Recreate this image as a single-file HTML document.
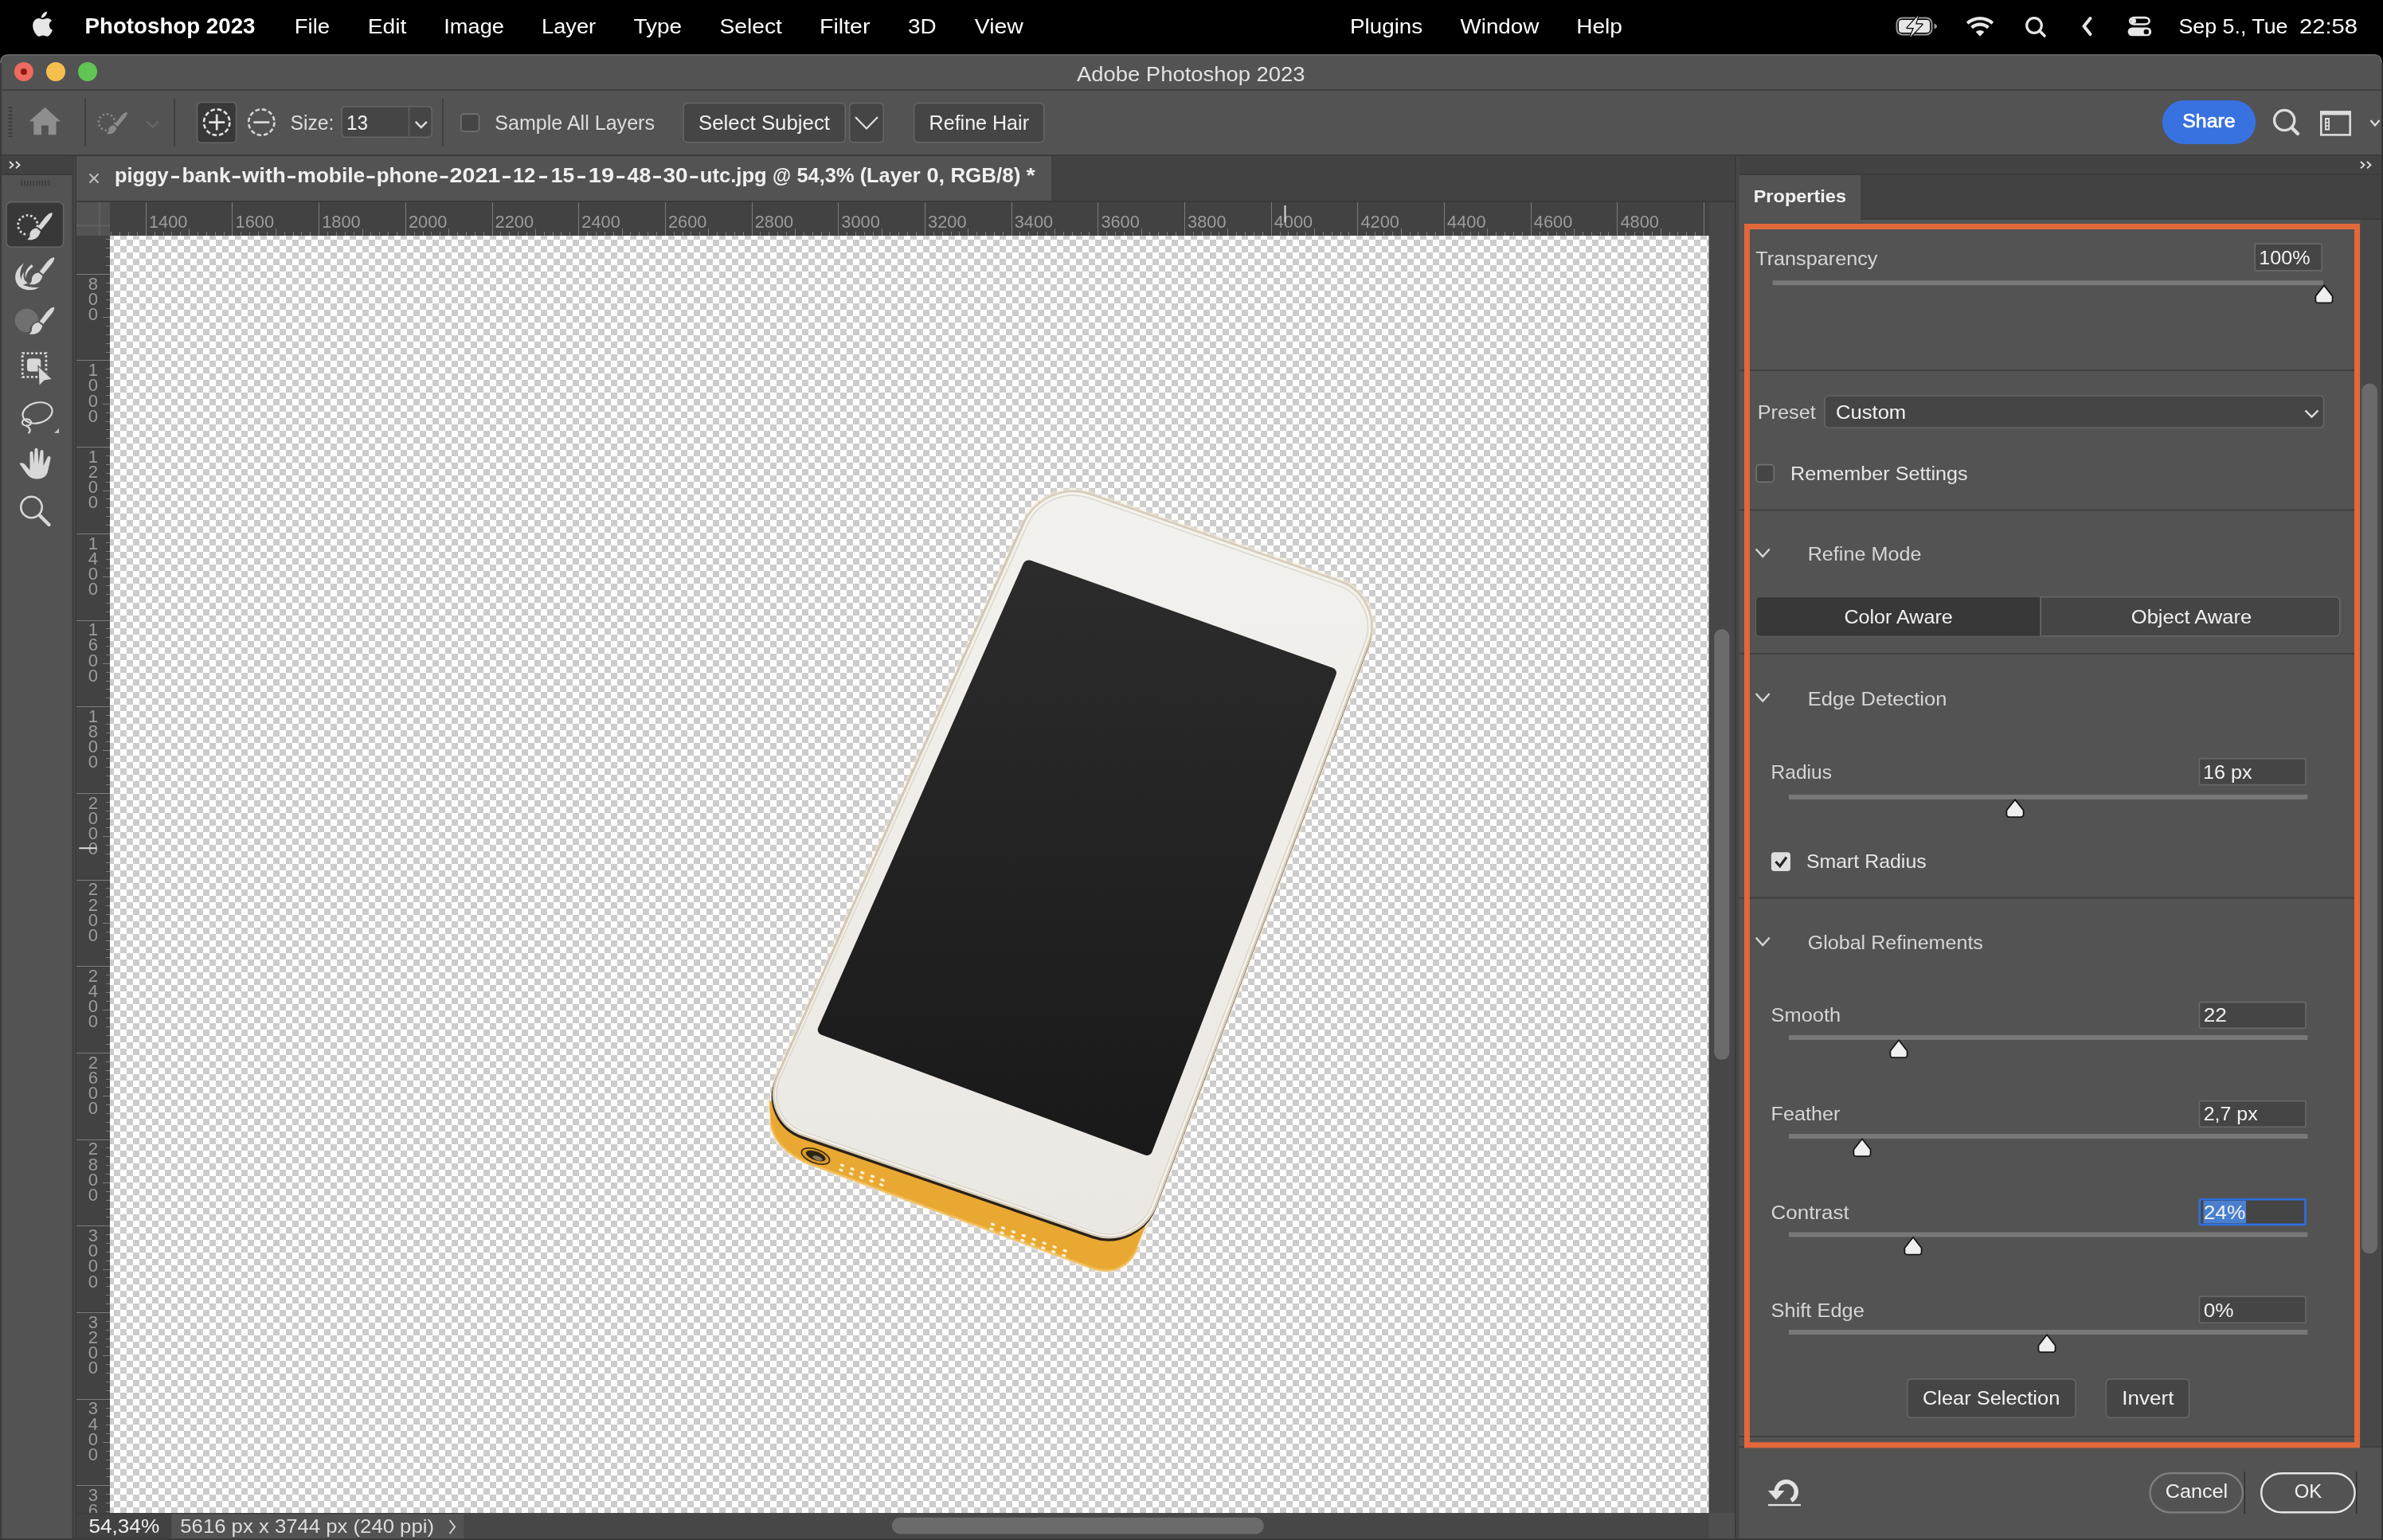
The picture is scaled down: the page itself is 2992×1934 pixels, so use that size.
<!DOCTYPE html>
<html lang="en"><head><meta charset="utf-8"><title>Adobe Photoshop 2023</title>
<style>html,body{margin:0;padding:0;background:#000}body{width:2992px;height:1934px}svg{display:block;will-change:transform}text{white-space:pre}</style></head>
<body>
<svg width="2992" height="1934" viewBox="0 0 2992 1934" font-family="'Liberation Sans', sans-serif">
<defs>
<pattern id="chk" x="7" y="5" width="16" height="16" patternUnits="userSpaceOnUse">
<rect width="16" height="16" fill="#ffffff"/><rect width="8" height="8" fill="#cccccc"/><rect x="8" y="8" width="8" height="8" fill="#cccccc"/>
</pattern>
<linearGradient id="scr" x1="0" y1="0" x2="0" y2="1"><stop offset="0" stop-color="#2c2c2c"/><stop offset="1" stop-color="#191919"/></linearGradient>
<linearGradient id="face" x1="0" y1="0" x2="0" y2="1"><stop offset="0" stop-color="#f3f1ed"/><stop offset="1" stop-color="#ebe8e3"/></linearGradient>
<filter id="blur3" x="-10%" y="-10%" width="120%" height="120%"><feGaussianBlur stdDeviation="2.2"/></filter>
<clipPath id="canvasclip"><rect x="138" y="296" width="2007.5" height="1604"/></clipPath>
</defs>
<rect x="0" y="0" width="2992" height="1934" fill="#000000" />
<g id="menubar">
<g transform="translate(39.5,14.5) scale(1.0)" fill="#e6e6e6"><path d="M17.6 5.2c1.3-1.6 2.2-3.7 2-5.2-1.9 .1-4.1 1.300-5.400 2.900-1.200 1.400-2.200 3.500-1.900 5.000 2.000 .100 4.000-1.100 5.300-2.700z"/><path d="M22.300 17.100c0-3.800 3.100-5.600 3.300-5.700-1.800-2.600-4.600-3.000-5.600-3.000-2.400-.200-4.600 1.400-5.800 1.400-1.200 0-3.000-1.400-5.000-1.300-2.500 0-4.900 1.500-6.200 3.800-2.700 4.600-.700 11.400 1.900 15.100 1.300 1.800 2.800 3.900 4.800 3.800 1.900-.100 2.600-1.200 5.000-1.200 2.300 0 3.000 1.200 5.000 1.200 2.100 0 3.400-1.900 4.600-3.700 1.500-2.100 2.100-4.200 2.100-4.300-.100 0-4.000-1.500-4.100-6.100z"/></g>
<text x="106.5" y="42.1" font-size="27" fill="#ffffff" font-weight="700" textLength="214" lengthAdjust="spacingAndGlyphs" >Photoshop 2023</text>
<text x="369.8" y="42.1" font-size="26" fill="#ffffff" textLength="44.3" lengthAdjust="spacingAndGlyphs" >File</text>
<text x="461.7" y="42.1" font-size="26" fill="#ffffff" textLength="48.7" lengthAdjust="spacingAndGlyphs" >Edit</text>
<text x="557.3" y="42.1" font-size="26" fill="#ffffff" textLength="75.6" lengthAdjust="spacingAndGlyphs" >Image</text>
<text x="680" y="42.1" font-size="26" fill="#ffffff" textLength="68.1" lengthAdjust="spacingAndGlyphs" >Layer</text>
<text x="795.5" y="42.1" font-size="26" fill="#ffffff" textLength="60.6" lengthAdjust="spacingAndGlyphs" >Type</text>
<text x="903.5" y="42.1" font-size="26" fill="#ffffff" textLength="78.3" lengthAdjust="spacingAndGlyphs" >Select</text>
<text x="1029.1" y="42.1" font-size="26" fill="#ffffff" textLength="63.4" lengthAdjust="spacingAndGlyphs" >Filter</text>
<text x="1139.9" y="42.1" font-size="26" fill="#ffffff" textLength="35.7" lengthAdjust="spacingAndGlyphs" >3D</text>
<text x="1223.8" y="42.1" font-size="26" fill="#ffffff" textLength="61" lengthAdjust="spacingAndGlyphs" >View</text>
<text x="1695.1" y="42.1" font-size="26" fill="#ffffff" textLength="91.1" lengthAdjust="spacingAndGlyphs" >Plugins</text>
<text x="1833.5" y="42.1" font-size="26" fill="#ffffff" textLength="98.8" lengthAdjust="spacingAndGlyphs" >Window</text>
<text x="1979.2" y="42.1" font-size="26" fill="#ffffff" textLength="57.7" lengthAdjust="spacingAndGlyphs" >Help</text>
<text x="2735.5" y="41.5" font-size="26" fill="#ffffff" textLength="137" lengthAdjust="spacingAndGlyphs" >Sep 5., Tue</text>
<text x="2887" y="41.5" font-size="26" fill="#ffffff" textLength="73" lengthAdjust="spacingAndGlyphs" >22:58</text>
<rect x="2381.5" y="22.5" width="44" height="21" fill="none" rx="7" stroke="#9a9a9a" stroke-width="2" />
<rect x="2384" y="25" width="39" height="16" fill="#e6e6e6" rx="4" />
<path d="M2428.5 29.5 q3.500 1.500 3.500 3.500 q0 2 -3.500 3.500 z" fill="#9a9a9a" />
<path d="M2408.5 19.5 L2394.5 35 L2403 35 L2398 47 L2413.5 30.5 L2405 30.5 Z" fill="#e6e6e6" stroke="#000000" stroke-width="2.4" stroke-linejoin="round" paint-order="stroke"/>
<g fill="none" stroke="#e6e6e6" stroke-width="4.200" stroke-linecap="butt"><path d="M2470.200 29.200 A23.600 23.600 0 0 1 2501.800 29.200"/><path d="M2475.600 34.600 A15.600 15.600 0 0 1 2496.400 34.600"/></g>
<path d="M2486 45.800 L2480.600 40 A8 8 0 0 1 2491.400 40 Z" fill="#e6e6e6" />
<circle cx="2554" cy="32" r="9.3" fill="none" stroke="#e6e6e6" stroke-width="3.2" />
<line x1="2560.8" y1="38.8" x2="2567" y2="45" stroke="#e6e6e6" stroke-width="3.6" stroke-linecap="round"/>
<path d="M2624.5 23 L2616.5 33 L2624.5 43" fill="none" stroke="#e6e6e6" stroke-width="4" stroke-linejoin="round" stroke-linecap="round"/>
<rect x="2674.1" y="22.1" width="24.6" height="8.4" fill="none" rx="5.5" stroke="#e6e6e6" stroke-width="2.6" />
<circle cx="2678.8" cy="26.3" r="3.2" fill="#e6e6e6" />
<rect x="2671.6" y="34.5" width="29.6" height="10.8" fill="#e6e6e6" rx="5.4" />
<circle cx="2694.8" cy="39.9" r="3.2" fill="#000000" />
</g>
<g id="window">
<path d="M0 1934 L0 79 Q0 68 11 68 L2980 68 Q2991 68 2991 79 L2991 1934 Z" fill="#535353" />
<path d="M1 79 Q1 69 11 69 L2980 69 Q2990 69 2990 79" fill="none" stroke="#6e6e6e" stroke-width="1.2" />
<circle cx="29.9" cy="90.1" r="12" fill="#ed6a5e" />
<circle cx="29.9" cy="90.1" r="4" fill="#8c1a10" />
<circle cx="70" cy="90.1" r="12" fill="#f5bf4f" />
<circle cx="110" cy="90.1" r="12" fill="#61c554" />
<text x="1352" y="101.5" font-size="26" fill="#e2e2e2" textLength="286.5" lengthAdjust="spacingAndGlyphs" >Adobe Photoshop 2023</text>
<rect x="0" y="112" width="2991" height="2" fill="#404040" />
<g id="optionsbar">
<line x1="13" y1="134" x2="13" y2="172" stroke="#3c3c3c" stroke-width="5" stroke-dasharray="2 2.600"/>
<path d="M56.400 134.800 L76.200 152.600 L70.500 152.600 L70.500 169.300 L60.800 169.300 L60.800 157.600 L52 157.600 L52 169.300 L42.300 169.300 L42.300 152.600 L36.600 152.600 Z" fill="#8e8e8e" />
<rect x="106" y="123.5" width="2" height="60" fill="#414141" />
<circle cx="134" cy="153.5" r="10.2" fill="none" stroke="#8a8a8a" stroke-width="2.4" stroke-dasharray="2.400 2.900"/>
<path d="M160 141 C157 140.500 154 143 151.500 146.500 L143.800 156.300 L147.500 159.300 L155.500 149.800 C158.300 146.500 160.300 143.500 160 141 Z" fill="#8a8a8a" />
<path d="M142.700 157.300 C138.500 157.600 136 161 136.300 164.200 C136.200 166 135 167.200 133.600 168 C138.500 169.200 144.500 167.500 146.600 160.400 Z" fill="#8a8a8a" />
<path d="M184.500 152.500 L191.700 159.800 L199 152.500" fill="none" stroke="#686868" stroke-width="2.2" />
<rect x="218" y="123.5" width="2" height="60" fill="#414141" />
<rect x="247.55" y="128.45" width="49" height="50.7" fill="#383838" rx="5" stroke="#666666" stroke-width="1.5" />
<circle cx="272.2" cy="153.6" r="16.2" fill="none" stroke="#e2e2e2" stroke-width="2.6" stroke-dasharray="5.600 2.880"/>
<line x1="262.2" y1="153.6" x2="282.2" y2="153.6" stroke="#e2e2e2" stroke-width="2.8" />
<line x1="272.2" y1="143.6" x2="272.2" y2="163.6" stroke="#e2e2e2" stroke-width="2.8" />
<circle cx="328.3" cy="153.6" r="16.2" fill="none" stroke="#d6d6d6" stroke-width="2.6" stroke-dasharray="5.600 2.880"/>
<line x1="318.3" y1="153.6" x2="338.3" y2="153.6" stroke="#d6d6d6" stroke-width="2.8" />
<text x="364.5" y="163" font-size="26" fill="#dddddd" textLength="55" lengthAdjust="spacingAndGlyphs" >Size:</text>
<rect x="428.95" y="133.65" width="113.2" height="38.5" fill="#454545" rx="5" stroke="#666666" stroke-width="1.5" />
<rect x="512.6" y="133.5" width="1.8" height="38.8" fill="#5e5e5e" />
<text x="435" y="163" font-size="26" fill="#f0f0f0" textLength="27" lengthAdjust="spacingAndGlyphs" >13</text>
<path d="M521.800 152.800 L528.800 160 L535.800 152.800" fill="none" stroke="#e0e0e0" stroke-width="2.4" />
<rect x="555" y="123.5" width="2" height="60" fill="#414141" />
<rect x="578.8" y="143.1" width="22.7" height="21.9" fill="#454545" rx="4" stroke="#737373" stroke-width="1.6" />
<text x="621.3" y="163" font-size="26" fill="#dddddd" textLength="200.7" lengthAdjust="spacingAndGlyphs" >Sample All Layers</text>
<rect x="858.05" y="129.45" width="203.2" height="49.2" fill="#454545" rx="5" stroke="#666666" stroke-width="1.5" />
<text x="877" y="163" font-size="26" fill="#f0f0f0" textLength="165" lengthAdjust="spacingAndGlyphs" >Select Subject</text>
<rect x="1066.65" y="129.45" width="42.6" height="49.2" fill="#454545" rx="5" stroke="#666666" stroke-width="1.5" />
<path d="M1074 147 L1088 161.500 L1102 147" fill="none" stroke="#e0e0e0" stroke-width="2.2" />
<rect x="1147.65" y="129.45" width="163" height="49.2" fill="#454545" rx="5" stroke="#666666" stroke-width="1.5" />
<text x="1166.6" y="163" font-size="26" fill="#f0f0f0" textLength="125.4" lengthAdjust="spacingAndGlyphs" >Refine Hair</text>
<rect x="2714.9" y="126" width="117.4" height="55" fill="#3871e0" rx="27.5" />
<text x="2740.3" y="160" font-size="24.5" fill="#ffffff" textLength="66.3" lengthAdjust="spacingAndGlyphs" stroke="#ffffff" stroke-width="0.700">Share</text>
<circle cx="2868.2" cy="151" r="12.6" fill="none" stroke="#dcdcdc" stroke-width="3.4" />
<line x1="2877.4" y1="160.4" x2="2885" y2="168" stroke="#dcdcdc" stroke-width="4.4" stroke-linecap="round"/>
<rect x="2914.3" y="140.6" width="36.4" height="28.8" fill="none" stroke="#dcdcdc" stroke-width="2.6" />
<rect x="2913" y="139.3" width="39" height="5.2" fill="#dcdcdc" />
<rect x="2919" y="148" width="6" height="15.6" fill="#dcdcdc" />
<rect x="2920.8" y="150.3" width="2.4" height="2.6" fill="#535353" />
<rect x="2920.8" y="154.6" width="2.4" height="2.6" fill="#535353" />
<rect x="2920.8" y="158.9" width="2.4" height="2.6" fill="#535353" />
<path d="M2976.5 151 L2982 157.500 L2987.5 151" fill="none" stroke="#dcdcdc" stroke-width="2.2" />
<rect x="0" y="194" width="2991" height="2" fill="#3c3c3c" />
</g>
<g id="tools">
<rect x="0" y="68" width="2" height="1866" fill="#3e3e3e" opacity="0.0"/>
<rect x="2" y="196" width="88.5" height="22" fill="#424242" />
<rect x="2" y="218" width="88.5" height="2" fill="#3a3a3a" />
<path d="M12 203 L16.500 207.200 L12 211.400 M20 203 L24.500 207.200 L20 211.400" fill="none" stroke="#e0e0e0" stroke-width="1.9" />
<line x1="26.5" y1="230" x2="64" y2="230" stroke="#3c3c3c" stroke-width="7" stroke-dasharray="1.600 2.100"/>
<rect x="90.5" y="196" width="5.5" height="1738" fill="#3d3d3d" />
<rect x="92.6" y="196" width="1.5" height="1738" fill="#4a4a4a" />
<rect x="8.05" y="253.75" width="71.6" height="56.5" fill="#383838" rx="6" stroke="#666666" stroke-width="1.5" />
<circle cx="34.9" cy="282.6" r="12.2" fill="none" stroke="#d8d8d8" stroke-width="2.8" stroke-dasharray="2.700 2.780"/>
<g transform="translate(0,0)"><path d="M34 301.500 C36.500 300.500 37.200 298.800 37.200 296.800 C37 292 40.500 287.800 46.500 287.500 L51.800 291.800 C49.500 300.500 41.500 303.500 34 301.500 Z" fill="none" stroke="#383838" stroke-width="5"/><path d="M65.600 267.300 C63.200 266.800 59.800 269.200 56.500 273 L47.300 285 L51.800 288.600 L61.200 277 C64.400 273 66.200 269.500 65.600 267.300 Z" fill="#d8d8d8"/><path d="M46 286.500 C40.500 286.800 37.200 291 37.400 295.600 C37.400 298 36.200 299.700 34.200 300.900 C40.500 302.500 48.500 300 50.900 290.400 Z" fill="#d8d8d8"/></g>
<path d="M30 330.500 C22 336 18 343.500 19.500 351.500 C21 359.500 28 364 36.500 364.300 C42 364.500 46.500 363 49.500 360.500 C45 361.500 41.500 361 38.500 360 C42 359.500 45 358 47 356 C42 357.500 37 357 33.500 354.500 C29.500 351.500 28.500 346.500 30.500 341.500 C27.500 344.500 26.500 348 27 351.500 C24 346 25 338.500 30 330.500 Z" fill="#d8d8d8" />
<path d="M40 332 C33.500 336.500 30.500 343 32 350 C33 344 36 338.500 41.500 335 Z" fill="#d8d8d8" />
<g transform="translate(2.5,56)"><path d="M34 301.500 C36.500 300.500 37.200 298.800 37.200 296.800 C37 292 40.500 287.800 46.500 287.500 L51.800 291.800 C49.500 300.500 41.500 303.500 34 301.500 Z" fill="none" stroke="#535353" stroke-width="5"/><path d="M65.600 267.300 C63.200 266.800 59.800 269.200 56.500 273 L47.300 285 L51.800 288.600 L61.200 277 C64.400 273 66.200 269.500 65.600 267.300 Z" fill="#d8d8d8"/><path d="M46 286.500 C40.500 286.800 37.200 291 37.400 295.600 C37.400 298 36.200 299.700 34.200 300.900 C40.500 302.500 48.500 300 50.900 290.400 Z" fill="#d8d8d8"/></g>
<circle cx="33.5" cy="402.5" r="14.8" fill="#707070" />
<g transform="translate(2.5,118.5)"><path d="M34 301.500 C36.500 300.500 37.200 298.800 37.200 296.800 C37 292 40.500 287.800 46.500 287.500 L51.800 291.800 C49.500 300.500 41.500 303.500 34 301.500 Z" fill="none" stroke="#535353" stroke-width="5"/><path d="M65.600 267.300 C63.200 266.800 59.800 269.200 56.500 273 L47.300 285 L51.800 288.600 L61.200 277 C64.400 273 66.200 269.500 65.600 267.300 Z" fill="#d8d8d8"/><path d="M46 286.500 C40.500 286.800 37.200 291 37.400 295.600 C37.400 298 36.200 299.700 34.200 300.900 C40.500 302.500 48.500 300 50.900 290.400 Z" fill="#d8d8d8"/></g>
<rect x="28.2" y="443.6" width="29.7" height="29.7" fill="none" stroke="#d8d8d8" stroke-width="2.8" stroke-dasharray="2.800 2.600"/>
<rect x="34" y="450.3" width="17.2" height="16.2" fill="#d8d8d8" rx="3.5" />
<path d="M48.700 461 L64.500 476 L55.500 477.500 L49.500 483.500 Z" fill="#d8d8d8" stroke="#535353" stroke-width="2.4" paint-order="stroke"/>
<g fill="none" stroke="#d8d8d8" stroke-width="2.200"><ellipse cx="47" cy="518.500" rx="18.800" ry="12.800" transform="rotate(-14 47 518.500)"/><ellipse cx="33.500" cy="530.500" rx="5.600" ry="4.200"/><path d="M33 534.500 C37.500 537 39.500 541 35.500 544"/></g>
<path d="M74 538 L74 544 L68 544 Z" fill="#c0c0c0" />
<path d="M24.400 582 C27 580.500 30 581.500 32 584 L37.500 590.500 L37.500 569 C37.500 566 41.500 566 41.500 569 L42.500 583 L43.500 565 C43.500 562 47.500 562 47.500 565 L48.500 583 L50.500 567 C50.500 564.200 54.500 564.200 54.500 567 L54.500 585 L59.500 574.500 C60.500 572 64.200 573 63.500 576 L60 592 C58.500 598 54 601.500 47 601.500 C41 601.500 37 599.500 33.500 595 Z" fill="#d8d8d8" />
<circle cx="39.5" cy="637" r="13.2" fill="none" stroke="#d8d8d8" stroke-width="2.6" />
<line x1="49.5" y1="647" x2="61.5" y2="659" stroke="#d8d8d8" stroke-width="4.4" stroke-linecap="round"/>
</g>
<g id="doctabs">
<rect x="96" y="196" width="2082" height="56" fill="#424242" />
<rect x="96" y="196" width="1224" height="56" fill="#535353" />
<rect x="96" y="252" width="2082" height="2" fill="#3a3a3a" />
<path d="M112.500 218.500 L123.500 229.500 M123.500 218.500 L112.500 229.500" fill="none" stroke="#c2c2c2" stroke-width="1.9" />
<g id="doctitle">
<text x="144.1" y="229.3" font-size="25" fill="#f0f0f0" font-weight="700" textLength="67.5" lengthAdjust="spacingAndGlyphs" >piggy</text>
<text x="220.05" y="229.3" font-size="25" fill="#f0f0f0" font-weight="700" text-anchor="middle" textLength="13" lengthAdjust="spacingAndGlyphs">-</text>
<text x="228.5" y="229.3" font-size="25" fill="#f0f0f0" font-weight="700" textLength="61.1" lengthAdjust="spacingAndGlyphs" >bank</text>
<text x="296.8" y="229.3" font-size="25" fill="#f0f0f0" font-weight="700" text-anchor="middle" textLength="13" lengthAdjust="spacingAndGlyphs">-</text>
<text x="304" y="229.3" font-size="25" fill="#f0f0f0" font-weight="700" textLength="54.9" lengthAdjust="spacingAndGlyphs" >with</text>
<text x="366.05" y="229.3" font-size="25" fill="#f0f0f0" font-weight="700" text-anchor="middle" textLength="13" lengthAdjust="spacingAndGlyphs">-</text>
<text x="373.2" y="229.3" font-size="25" fill="#f0f0f0" font-weight="700" textLength="85.1" lengthAdjust="spacingAndGlyphs" >mobile</text>
<text x="465.5" y="229.3" font-size="25" fill="#f0f0f0" font-weight="700" text-anchor="middle" textLength="13" lengthAdjust="spacingAndGlyphs">-</text>
<text x="472.7" y="229.3" font-size="25" fill="#f0f0f0" font-weight="700" textLength="77.5" lengthAdjust="spacingAndGlyphs" >phone</text>
<text x="557.4" y="229.3" font-size="25" fill="#f0f0f0" font-weight="700" text-anchor="middle" textLength="13" lengthAdjust="spacingAndGlyphs">-</text>
<text x="564.6" y="229.3" font-size="25" fill="#f0f0f0" font-weight="700" textLength="63.7" lengthAdjust="spacingAndGlyphs" >2021</text>
<text x="636.1" y="229.3" font-size="25" fill="#f0f0f0" font-weight="700" text-anchor="middle" textLength="13" lengthAdjust="spacingAndGlyphs">-</text>
<text x="643.9" y="229.3" font-size="25" fill="#f0f0f0" font-weight="700" textLength="28.4" lengthAdjust="spacingAndGlyphs" >12</text>
<text x="682" y="229.3" font-size="25" fill="#f0f0f0" font-weight="700" text-anchor="middle" textLength="13" lengthAdjust="spacingAndGlyphs">-</text>
<text x="691.7" y="229.3" font-size="25" fill="#f0f0f0" font-weight="700" textLength="29.4" lengthAdjust="spacingAndGlyphs" >15</text>
<text x="729.9" y="229.3" font-size="25" fill="#f0f0f0" font-weight="700" text-anchor="middle" textLength="13" lengthAdjust="spacingAndGlyphs">-</text>
<text x="738.7" y="229.3" font-size="25" fill="#f0f0f0" font-weight="700" textLength="32.4" lengthAdjust="spacingAndGlyphs" >19</text>
<text x="779.35" y="229.3" font-size="25" fill="#f0f0f0" font-weight="700" text-anchor="middle" textLength="13" lengthAdjust="spacingAndGlyphs">-</text>
<text x="787.6" y="229.3" font-size="25" fill="#f0f0f0" font-weight="700" textLength="29.7" lengthAdjust="spacingAndGlyphs" >48</text>
<text x="824.9" y="229.3" font-size="25" fill="#f0f0f0" font-weight="700" text-anchor="middle" textLength="13" lengthAdjust="spacingAndGlyphs">-</text>
<text x="832.5" y="229.3" font-size="25" fill="#f0f0f0" font-weight="700" textLength="31.1" lengthAdjust="spacingAndGlyphs" >30</text>
<text x="871.2" y="229.3" font-size="25" fill="#f0f0f0" font-weight="700" text-anchor="middle" textLength="13" lengthAdjust="spacingAndGlyphs">-</text>
<text x="878.8" y="229.3" font-size="25" fill="#f0f0f0" font-weight="700" textLength="83.9" lengthAdjust="spacingAndGlyphs" >utc.jpg</text>
<text x="970" y="229.3" font-size="25" fill="#f0f0f0" font-weight="700" textLength="23.1" lengthAdjust="spacingAndGlyphs" >@</text>
<text x="1000.4" y="229.3" font-size="25" fill="#f0f0f0" font-weight="700" textLength="72.1" lengthAdjust="spacingAndGlyphs" >54,3%</text>
<text x="1079.7" y="229.3" font-size="25" fill="#f0f0f0" font-weight="700" textLength="76" lengthAdjust="spacingAndGlyphs" >(Layer</text>
<text x="1163.5" y="229.3" font-size="25" fill="#f0f0f0" font-weight="700" textLength="22.6" lengthAdjust="spacingAndGlyphs" >0,</text>
<text x="1193.4" y="229.3" font-size="25" fill="#f0f0f0" font-weight="700" textLength="87.9" lengthAdjust="spacingAndGlyphs" >RGB/8)</text>
<text x="1288.6" y="229.3" font-size="25" fill="#f0f0f0" font-weight="700" textLength="11.2" lengthAdjust="spacingAndGlyphs" >*</text>
</g>
</g>
<g id="docarea">
<rect x="96" y="254" width="2082" height="1678" fill="#474747" />
<rect x="138" y="296" width="2007.5" height="1604" fill="url(#chk)" />
<rect x="96" y="254" width="2049.5" height="42" fill="#424242" />
<rect x="96" y="254" width="42" height="1646" fill="#424242" />
<rect x="96" y="254" width="42" height="42" fill="#535353" />
<line x1="125" y1="254" x2="125" y2="296" stroke="#6c6c6c" stroke-width="2.4" stroke-dasharray="1 1.150"/>
<line x1="96" y1="283.4" x2="138" y2="283.4" stroke="#6c6c6c" stroke-width="2.4" stroke-dasharray="1 1.150"/>
<path d="M139.83 291V296M150.70 291V296M161.56 291V296M172.43 291V296M183.30 254V296M194.17 291V296M205.04 291V296M215.90 291V296M226.77 291V296M237.64 287V296M248.51 291V296M259.38 291V296M270.24 291V296M281.11 291V296M291.98 254V296M302.85 291V296M313.72 291V296M324.58 291V296M335.45 291V296M346.32 287V296M357.19 291V296M368.06 291V296M378.92 291V296M389.79 291V296M400.66 254V296M411.53 291V296M422.40 291V296M433.26 291V296M444.13 291V296M455.00 287V296M465.87 291V296M476.74 291V296M487.60 291V296M498.47 291V296M509.34 254V296M520.21 291V296M531.08 291V296M541.94 291V296M552.81 291V296M563.68 287V296M574.55 291V296M585.42 291V296M596.28 291V296M607.15 291V296M618.02 254V296M628.89 291V296M639.76 291V296M650.62 291V296M661.49 291V296M672.36 287V296M683.23 291V296M694.10 291V296M704.96 291V296M715.83 291V296M726.70 254V296M737.57 291V296M748.44 291V296M759.30 291V296M770.17 291V296M781.04 287V296M791.91 291V296M802.78 291V296M813.64 291V296M824.51 291V296M835.38 254V296M846.25 291V296M857.12 291V296M867.98 291V296M878.85 291V296M889.72 287V296M900.59 291V296M911.46 291V296M922.32 291V296M933.19 291V296M944.06 254V296M954.93 291V296M965.80 291V296M976.66 291V296M987.53 291V296M998.40 287V296M1009.27 291V296M1020.14 291V296M1031.00 291V296M1041.87 291V296M1052.74 254V296M1063.61 291V296M1074.48 291V296M1085.34 291V296M1096.21 291V296M1107.08 287V296M1117.95 291V296M1128.82 291V296M1139.68 291V296M1150.55 291V296M1161.42 254V296M1172.29 291V296M1183.16 291V296M1194.02 291V296M1204.89 291V296M1215.76 287V296M1226.63 291V296M1237.50 291V296M1248.36 291V296M1259.23 291V296M1270.10 254V296M1280.97 291V296M1291.84 291V296M1302.70 291V296M1313.57 291V296M1324.44 287V296M1335.31 291V296M1346.18 291V296M1357.04 291V296M1367.91 291V296M1378.78 254V296M1389.65 291V296M1400.52 291V296M1411.38 291V296M1422.25 291V296M1433.12 287V296M1443.99 291V296M1454.86 291V296M1465.72 291V296M1476.59 291V296M1487.46 254V296M1498.33 291V296M1509.20 291V296M1520.06 291V296M1530.93 291V296M1541.80 287V296M1552.67 291V296M1563.54 291V296M1574.40 291V296M1585.27 291V296M1596.14 254V296M1607.01 291V296M1617.88 291V296M1628.74 291V296M1639.61 291V296M1650.48 287V296M1661.35 291V296M1672.22 291V296M1683.08 291V296M1693.95 291V296M1704.82 254V296M1715.69 291V296M1726.56 291V296M1737.42 291V296M1748.29 291V296M1759.16 287V296M1770.03 291V296M1780.90 291V296M1791.76 291V296M1802.63 291V296M1813.50 254V296M1824.37 291V296M1835.24 291V296M1846.10 291V296M1856.97 291V296M1867.84 287V296M1878.71 291V296M1889.58 291V296M1900.44 291V296M1911.31 291V296M1922.18 254V296M1933.05 291V296M1943.92 291V296M1954.78 291V296M1965.65 291V296M1976.52 287V296M1987.39 291V296M1998.26 291V296M2009.12 291V296M2019.99 291V296M2030.86 254V296M2041.73 291V296M2052.60 291V296M2063.46 291V296M2074.33 291V296M2085.20 287V296M2096.07 291V296M2106.94 291V296M2117.80 291V296M2128.67 291V296M2139.54 254V296M133 300.83H138M133 311.70H138M133 322.56H138M133 333.43H138M96 344.30H138M133 355.17H138M133 366.04H138M133 376.90H138M133 387.77H138M129 398.64H138M133 409.51H138M133 420.38H138M133 431.24H138M133 442.11H138M96 452.98H138M133 463.85H138M133 474.72H138M133 485.58H138M133 496.45H138M129 507.32H138M133 518.19H138M133 529.06H138M133 539.92H138M133 550.79H138M96 561.66H138M133 572.53H138M133 583.40H138M133 594.26H138M133 605.13H138M129 616.00H138M133 626.87H138M133 637.74H138M133 648.60H138M133 659.47H138M96 670.34H138M133 681.21H138M133 692.08H138M133 702.94H138M133 713.81H138M129 724.68H138M133 735.55H138M133 746.42H138M133 757.28H138M133 768.15H138M96 779.02H138M133 789.89H138M133 800.76H138M133 811.62H138M133 822.49H138M129 833.36H138M133 844.23H138M133 855.10H138M133 865.96H138M133 876.83H138M96 887.70H138M133 898.57H138M133 909.44H138M133 920.30H138M133 931.17H138M129 942.04H138M133 952.91H138M133 963.78H138M133 974.64H138M133 985.51H138M96 996.38H138M133 1007.25H138M133 1018.12H138M133 1028.98H138M133 1039.85H138M129 1050.72H138M133 1061.59H138M133 1072.46H138M133 1083.32H138M133 1094.19H138M96 1105.06H138M133 1115.93H138M133 1126.80H138M133 1137.66H138M133 1148.53H138M129 1159.40H138M133 1170.27H138M133 1181.14H138M133 1192.00H138M133 1202.87H138M96 1213.74H138M133 1224.61H138M133 1235.48H138M133 1246.34H138M133 1257.21H138M129 1268.08H138M133 1278.95H138M133 1289.82H138M133 1300.68H138M133 1311.55H138M96 1322.42H138M133 1333.29H138M133 1344.16H138M133 1355.02H138M133 1365.89H138M129 1376.76H138M133 1387.63H138M133 1398.50H138M133 1409.36H138M133 1420.23H138M96 1431.10H138M133 1441.97H138M133 1452.84H138M133 1463.70H138M133 1474.57H138M129 1485.44H138M133 1496.31H138M133 1507.18H138M133 1518.04H138M133 1528.91H138M96 1539.78H138M133 1550.65H138M133 1561.52H138M133 1572.38H138M133 1583.25H138M129 1594.12H138M133 1604.99H138M133 1615.86H138M133 1626.72H138M133 1637.59H138M96 1648.46H138M133 1659.33H138M133 1670.20H138M133 1681.06H138M133 1691.93H138M129 1702.80H138M133 1713.67H138M133 1724.54H138M133 1735.40H138M133 1746.27H138M96 1757.14H138M133 1768.01H138M133 1778.88H138M133 1789.74H138M133 1800.61H138M129 1811.48H138M133 1822.35H138M133 1833.22H138M133 1844.08H138M133 1854.95H138M96 1865.82H138M133 1876.69H138M133 1887.56H138M133 1898.42H138" fill="none" stroke="#7c7c7c" stroke-width="1" shape-rendering="crispEdges"/>
<text x="186.9" y="286" font-size="22" fill="#9c9c9c" textLength="48.5" lengthAdjust="spacingAndGlyphs" >1400</text>
<text x="295.58" y="286" font-size="22" fill="#9c9c9c" textLength="48.5" lengthAdjust="spacingAndGlyphs" >1600</text>
<text x="404.26" y="286" font-size="22" fill="#9c9c9c" textLength="48.5" lengthAdjust="spacingAndGlyphs" >1800</text>
<text x="512.94" y="286" font-size="22" fill="#9c9c9c" textLength="48.5" lengthAdjust="spacingAndGlyphs" >2000</text>
<text x="621.62" y="286" font-size="22" fill="#9c9c9c" textLength="48.5" lengthAdjust="spacingAndGlyphs" >2200</text>
<text x="730.3" y="286" font-size="22" fill="#9c9c9c" textLength="48.5" lengthAdjust="spacingAndGlyphs" >2400</text>
<text x="838.98" y="286" font-size="22" fill="#9c9c9c" textLength="48.5" lengthAdjust="spacingAndGlyphs" >2600</text>
<text x="947.66" y="286" font-size="22" fill="#9c9c9c" textLength="48.5" lengthAdjust="spacingAndGlyphs" >2800</text>
<text x="1056.34" y="286" font-size="22" fill="#9c9c9c" textLength="48.5" lengthAdjust="spacingAndGlyphs" >3000</text>
<text x="1165.02" y="286" font-size="22" fill="#9c9c9c" textLength="48.5" lengthAdjust="spacingAndGlyphs" >3200</text>
<text x="1273.7" y="286" font-size="22" fill="#9c9c9c" textLength="48.5" lengthAdjust="spacingAndGlyphs" >3400</text>
<text x="1382.38" y="286" font-size="22" fill="#9c9c9c" textLength="48.5" lengthAdjust="spacingAndGlyphs" >3600</text>
<text x="1491.06" y="286" font-size="22" fill="#9c9c9c" textLength="48.5" lengthAdjust="spacingAndGlyphs" >3800</text>
<text x="1599.74" y="286" font-size="22" fill="#9c9c9c" textLength="48.5" lengthAdjust="spacingAndGlyphs" >4000</text>
<text x="1708.42" y="286" font-size="22" fill="#9c9c9c" textLength="48.5" lengthAdjust="spacingAndGlyphs" >4200</text>
<text x="1817.1" y="286" font-size="22" fill="#9c9c9c" textLength="48.5" lengthAdjust="spacingAndGlyphs" >4400</text>
<text x="1925.78" y="286" font-size="22" fill="#9c9c9c" textLength="48.5" lengthAdjust="spacingAndGlyphs" >4600</text>
<text x="2034.46" y="286" font-size="22" fill="#9c9c9c" textLength="48.5" lengthAdjust="spacingAndGlyphs" >4800</text>
<g clip-path="url(#canvasclip)" transform="translate(0,0)"></g>
<clipPath id="vrclip"><rect x="96" y="296" width="42" height="1604"/></clipPath><g clip-path="url(#vrclip)">
<text x="116.8" y="363.6" font-size="22" fill="#9c9c9c" text-anchor="middle" >8</text>
<text x="116.8" y="382.75" font-size="22" fill="#9c9c9c" text-anchor="middle" >0</text>
<text x="116.8" y="401.9" font-size="22" fill="#9c9c9c" text-anchor="middle" >0</text>
<text x="116.8" y="472.28" font-size="22" fill="#9c9c9c" text-anchor="middle" >1</text>
<text x="116.8" y="491.43" font-size="22" fill="#9c9c9c" text-anchor="middle" >0</text>
<text x="116.8" y="510.58" font-size="22" fill="#9c9c9c" text-anchor="middle" >0</text>
<text x="116.8" y="529.73" font-size="22" fill="#9c9c9c" text-anchor="middle" >0</text>
<text x="116.8" y="580.96" font-size="22" fill="#9c9c9c" text-anchor="middle" >1</text>
<text x="116.8" y="600.11" font-size="22" fill="#9c9c9c" text-anchor="middle" >2</text>
<text x="116.8" y="619.26" font-size="22" fill="#9c9c9c" text-anchor="middle" >0</text>
<text x="116.8" y="638.41" font-size="22" fill="#9c9c9c" text-anchor="middle" >0</text>
<text x="116.8" y="689.64" font-size="22" fill="#9c9c9c" text-anchor="middle" >1</text>
<text x="116.8" y="708.79" font-size="22" fill="#9c9c9c" text-anchor="middle" >4</text>
<text x="116.8" y="727.94" font-size="22" fill="#9c9c9c" text-anchor="middle" >0</text>
<text x="116.8" y="747.09" font-size="22" fill="#9c9c9c" text-anchor="middle" >0</text>
<text x="116.8" y="798.32" font-size="22" fill="#9c9c9c" text-anchor="middle" >1</text>
<text x="116.8" y="817.47" font-size="22" fill="#9c9c9c" text-anchor="middle" >6</text>
<text x="116.8" y="836.62" font-size="22" fill="#9c9c9c" text-anchor="middle" >0</text>
<text x="116.8" y="855.77" font-size="22" fill="#9c9c9c" text-anchor="middle" >0</text>
<text x="116.8" y="907" font-size="22" fill="#9c9c9c" text-anchor="middle" >1</text>
<text x="116.8" y="926.15" font-size="22" fill="#9c9c9c" text-anchor="middle" >8</text>
<text x="116.8" y="945.3" font-size="22" fill="#9c9c9c" text-anchor="middle" >0</text>
<text x="116.8" y="964.45" font-size="22" fill="#9c9c9c" text-anchor="middle" >0</text>
<text x="116.8" y="1015.68" font-size="22" fill="#9c9c9c" text-anchor="middle" >2</text>
<text x="116.8" y="1034.83" font-size="22" fill="#9c9c9c" text-anchor="middle" >0</text>
<text x="116.8" y="1053.98" font-size="22" fill="#9c9c9c" text-anchor="middle" >0</text>
<text x="116.8" y="1073.13" font-size="22" fill="#9c9c9c" text-anchor="middle" >0</text>
<text x="116.8" y="1124.36" font-size="22" fill="#9c9c9c" text-anchor="middle" >2</text>
<text x="116.8" y="1143.51" font-size="22" fill="#9c9c9c" text-anchor="middle" >2</text>
<text x="116.8" y="1162.66" font-size="22" fill="#9c9c9c" text-anchor="middle" >0</text>
<text x="116.8" y="1181.81" font-size="22" fill="#9c9c9c" text-anchor="middle" >0</text>
<text x="116.8" y="1233.04" font-size="22" fill="#9c9c9c" text-anchor="middle" >2</text>
<text x="116.8" y="1252.19" font-size="22" fill="#9c9c9c" text-anchor="middle" >4</text>
<text x="116.8" y="1271.34" font-size="22" fill="#9c9c9c" text-anchor="middle" >0</text>
<text x="116.8" y="1290.49" font-size="22" fill="#9c9c9c" text-anchor="middle" >0</text>
<text x="116.8" y="1341.72" font-size="22" fill="#9c9c9c" text-anchor="middle" >2</text>
<text x="116.8" y="1360.87" font-size="22" fill="#9c9c9c" text-anchor="middle" >6</text>
<text x="116.8" y="1380.02" font-size="22" fill="#9c9c9c" text-anchor="middle" >0</text>
<text x="116.8" y="1399.17" font-size="22" fill="#9c9c9c" text-anchor="middle" >0</text>
<text x="116.8" y="1450.4" font-size="22" fill="#9c9c9c" text-anchor="middle" >2</text>
<text x="116.8" y="1469.55" font-size="22" fill="#9c9c9c" text-anchor="middle" >8</text>
<text x="116.8" y="1488.7" font-size="22" fill="#9c9c9c" text-anchor="middle" >0</text>
<text x="116.8" y="1507.85" font-size="22" fill="#9c9c9c" text-anchor="middle" >0</text>
<text x="116.8" y="1559.08" font-size="22" fill="#9c9c9c" text-anchor="middle" >3</text>
<text x="116.8" y="1578.23" font-size="22" fill="#9c9c9c" text-anchor="middle" >0</text>
<text x="116.8" y="1597.38" font-size="22" fill="#9c9c9c" text-anchor="middle" >0</text>
<text x="116.8" y="1616.53" font-size="22" fill="#9c9c9c" text-anchor="middle" >0</text>
<text x="116.8" y="1667.76" font-size="22" fill="#9c9c9c" text-anchor="middle" >3</text>
<text x="116.8" y="1686.91" font-size="22" fill="#9c9c9c" text-anchor="middle" >2</text>
<text x="116.8" y="1706.06" font-size="22" fill="#9c9c9c" text-anchor="middle" >0</text>
<text x="116.8" y="1725.21" font-size="22" fill="#9c9c9c" text-anchor="middle" >0</text>
<text x="116.8" y="1776.44" font-size="22" fill="#9c9c9c" text-anchor="middle" >3</text>
<text x="116.8" y="1795.59" font-size="22" fill="#9c9c9c" text-anchor="middle" >4</text>
<text x="116.8" y="1814.74" font-size="22" fill="#9c9c9c" text-anchor="middle" >0</text>
<text x="116.8" y="1833.89" font-size="22" fill="#9c9c9c" text-anchor="middle" >0</text>
<text x="116.8" y="1885.12" font-size="22" fill="#9c9c9c" text-anchor="middle" >3</text>
<text x="116.8" y="1904.27" font-size="22" fill="#9c9c9c" text-anchor="middle" >6</text>
<text x="116.8" y="1923.42" font-size="22" fill="#9c9c9c" text-anchor="middle" >0</text>
<text x="116.8" y="1942.57" font-size="22" fill="#9c9c9c" text-anchor="middle" >0</text>
</g>
<rect x="1612.5" y="258" width="2" height="21" fill="#dcdcdc" />
<rect x="99.3" y="1064.2" width="22" height="2" fill="#dcdcdc" />
</g>
<g id="phone" clip-path="url(#canvasclip)">
<path d="M1285.5 656.6C1299.4 625.5 1337.0 609.2 1369.2 620.5L1681.8 729.8C1714.0 741.1 1730.4 776.4 1718.3 808.3L1450.9 1514.2C1439.2 1545.1 1404.1 1561.5 1372.9 1550.8L1008.6 1425.8C977.4 1415.1 962.9 1381.6 976.3 1351.5ZM966 1382 L967.500 1408 C970 1430 985 1447 1014 1459.600 L1372 1591.700 C1395 1600 1418 1591 1427.500 1566 L1440 1535 L1300 1500 L1000 1400 Z" fill="#f1e8d8" stroke="#f1e8d8" stroke-width="6" filter="url(#blur3)" opacity="0.950"/>
<path d="M966 1382 L967.500 1408 C970 1430 985 1447 1014 1459.600 L1372 1591.700 C1395 1600 1418 1591 1427.500 1566 L1440 1535 L1300 1500 L1000 1400 Z" fill="#e9a832" />
<path d="M968 1410 C971 1431 986 1448 1014 1460.500 L1372 1592.500 C1395 1600.500 1418 1591.500 1428 1566" fill="none" stroke="#f0b746" stroke-width="3" opacity="0.800"/>
<path d="M1285.5 656.6C1299.4 625.5 1337.0 609.2 1369.2 620.5L1681.8 729.8C1714.0 741.1 1730.4 776.4 1718.3 808.3L1450.9 1514.2C1439.2 1545.1 1404.1 1561.5 1372.9 1550.8L1008.6 1425.8C977.4 1415.1 962.9 1381.6 976.3 1351.5Z" fill="#2a2118" stroke="#2a2118" stroke-width="3" transform="translate(-1,3)"/>
<path d="M1285.5 656.6C1299.4 625.5 1337.0 609.2 1369.2 620.5L1681.8 729.8C1714.0 741.1 1730.4 776.4 1718.3 808.3L1450.9 1514.2C1439.2 1545.1 1404.1 1561.5 1372.9 1550.8L1008.6 1425.8C977.4 1415.1 962.9 1381.6 976.3 1351.5Z" fill="#f4f2ee" stroke="#d6ccb9" stroke-width="2.6" />
<path d="M1290.2 658.5C1303.0 629.9 1337.7 615.0 1367.3 625.4L1680.2 735.1C1709.8 745.5 1724.9 778.0 1713.8 807.3L1446.0 1513.6C1435.3 1541.9 1403.1 1556.9 1374.5 1547.1L1009.0 1421.4C980.4 1411.6 967.1 1380.9 979.5 1353.3Z" fill="url(#face)" stroke="#dcd6ca" stroke-width="1.5" />
<path d="M1284.7 707.9C1286.2 704.4 1290.5 702.6 1294.1 703.8L1673.4 838.7C1677.0 839.9 1678.9 843.9 1677.5 847.5L1446.5 1446.5C1445.1 1450.1 1441.0 1451.9 1437.4 1450.6L1031.1 1299.4C1027.5 1298.1 1025.8 1294.1 1027.3 1290.6Z" fill="url(#scr)" />
<g transform="rotate(20.100 1024 1452)"><ellipse cx="1024" cy="1452" rx="18.500" ry="8.500" fill="#dc9c2a" stroke="#3a2a10" stroke-width="1.600"/><ellipse cx="1024" cy="1451.500" rx="13" ry="5.600" fill="#2e2416"/><ellipse cx="1027" cy="1453.500" rx="6.500" ry="2.600" fill="#8a7a5a"/></g>
<ellipse cx="1057.5" cy="1463.5" rx="2.900" ry="1.800" fill="#fbefd0" transform="rotate(20 1057.5 1463.5)"/>
<ellipse cx="1056.0" cy="1469.5" rx="2.900" ry="1.800" fill="#fbefd0" transform="rotate(20 1056.0 1469.5)"/>
<ellipse cx="1070.2" cy="1468.1" rx="2.900" ry="1.800" fill="#fbefd0" transform="rotate(20 1070.2 1468.1)"/>
<ellipse cx="1068.7" cy="1474.1" rx="2.900" ry="1.800" fill="#fbefd0" transform="rotate(20 1068.7 1474.1)"/>
<ellipse cx="1082.8" cy="1472.7" rx="2.900" ry="1.800" fill="#fbefd0" transform="rotate(20 1082.8 1472.7)"/>
<ellipse cx="1081.3" cy="1478.7" rx="2.900" ry="1.800" fill="#fbefd0" transform="rotate(20 1081.3 1478.7)"/>
<ellipse cx="1095.5" cy="1477.3" rx="2.900" ry="1.800" fill="#fbefd0" transform="rotate(20 1095.5 1477.3)"/>
<ellipse cx="1094.0" cy="1483.3" rx="2.900" ry="1.800" fill="#fbefd0" transform="rotate(20 1094.0 1483.3)"/>
<ellipse cx="1108.1" cy="1481.9" rx="2.900" ry="1.800" fill="#fbefd0" transform="rotate(20 1108.1 1481.9)"/>
<ellipse cx="1106.6" cy="1487.9" rx="2.900" ry="1.800" fill="#fbefd0" transform="rotate(20 1106.6 1487.9)"/>
<ellipse cx="1246.5" cy="1537.5" rx="2.900" ry="1.800" fill="#fbefd0" transform="rotate(20 1246.5 1537.5)"/>
<ellipse cx="1245.0" cy="1543.5" rx="2.900" ry="1.800" fill="#fbefd0" transform="rotate(20 1245.0 1543.5)"/>
<ellipse cx="1259.5" cy="1542.2" rx="2.900" ry="1.800" fill="#fbefd0" transform="rotate(20 1259.5 1542.2)"/>
<ellipse cx="1258.0" cy="1548.2" rx="2.900" ry="1.800" fill="#fbefd0" transform="rotate(20 1258.0 1548.2)"/>
<ellipse cx="1272.4" cy="1547.0" rx="2.900" ry="1.800" fill="#fbefd0" transform="rotate(20 1272.4 1547.0)"/>
<ellipse cx="1270.9" cy="1553.0" rx="2.900" ry="1.800" fill="#fbefd0" transform="rotate(20 1270.9 1553.0)"/>
<ellipse cx="1285.3" cy="1551.8" rx="2.900" ry="1.800" fill="#fbefd0" transform="rotate(20 1285.3 1551.8)"/>
<ellipse cx="1283.8" cy="1557.8" rx="2.900" ry="1.800" fill="#fbefd0" transform="rotate(20 1283.8 1557.8)"/>
<ellipse cx="1298.3" cy="1556.5" rx="2.900" ry="1.800" fill="#fbefd0" transform="rotate(20 1298.3 1556.5)"/>
<ellipse cx="1296.8" cy="1562.5" rx="2.900" ry="1.800" fill="#fbefd0" transform="rotate(20 1296.8 1562.5)"/>
<ellipse cx="1311.2" cy="1561.2" rx="2.900" ry="1.800" fill="#fbefd0" transform="rotate(20 1311.2 1561.2)"/>
<ellipse cx="1309.8" cy="1567.2" rx="2.900" ry="1.800" fill="#fbefd0" transform="rotate(20 1309.8 1567.2)"/>
<ellipse cx="1324.2" cy="1566.0" rx="2.900" ry="1.800" fill="#fbefd0" transform="rotate(20 1324.2 1566.0)"/>
<ellipse cx="1322.7" cy="1572.0" rx="2.900" ry="1.800" fill="#fbefd0" transform="rotate(20 1322.7 1572.0)"/>
<ellipse cx="1337.2" cy="1570.8" rx="2.900" ry="1.800" fill="#fbefd0" transform="rotate(20 1337.2 1570.8)"/>
<ellipse cx="1335.7" cy="1576.8" rx="2.900" ry="1.800" fill="#fbefd0" transform="rotate(20 1335.7 1576.8)"/>
</g>
<g id="scroll">
<rect x="2152.2" y="790" width="19.2" height="541" fill="#6b6b6b" rx="9.6" />
<rect x="96" y="1900" width="2082" height="32" fill="#474747" />
<rect x="1119.8" y="1905.8" width="467" height="20.8" fill="#6b6b6b" rx="10.4" />
<rect x="2145.5" y="1900" width="32.7" height="32" fill="#4f4f4f" />
<rect x="96" y="1900" width="119.3" height="32" fill="#424242" />
<rect x="215.3" y="1900" width="367" height="32" fill="#535353" />
<rect x="96" y="1900" width="486" height="1.5" fill="#3c3c3c" />
<text x="111.4" y="1925" font-size="24" fill="#f0f0f0" textLength="88.8" lengthAdjust="spacingAndGlyphs" >54,34%</text>
<text x="226.3" y="1925" font-size="24" fill="#dddddd" textLength="318.7" lengthAdjust="spacingAndGlyphs" >5616 px x 3744 px (240 ppi)</text>
<path d="M564.500 1909 L571 1917.500 L564.500 1926" fill="none" stroke="#d0d0d0" stroke-width="2" />
</g>
<g id="panel">
<rect x="2178" y="196" width="2.2" height="1736" fill="#3a3a3a" />
<rect x="2180.2" y="196" width="3.4" height="1736" fill="#464646" />
<rect x="2183.6" y="196" width="807.4" height="22.2" fill="#424242" />
<rect x="2183.6" y="218.2" width="807.4" height="1.8" fill="#3a3a3a" />
<rect x="2183.6" y="220" width="807.4" height="54" fill="#424242" />
<rect x="2183.6" y="274" width="807.4" height="2" fill="#3a3a3a" />
<rect x="2183.6" y="220" width="152.4" height="61" fill="#535353" />
<path d="M2964 203 L2968.500 207.200 L2964 211.400 M2972 203 L2976.500 207.200 L2972 211.400" fill="none" stroke="#e0e0e0" stroke-width="1.9" />
<text x="2201.7" y="253.6" font-size="22" fill="#f2f2f2" font-weight="700" textLength="116.3" lengthAdjust="spacingAndGlyphs" >Properties</text>
<rect x="2963.5" y="276" width="27.5" height="1540" fill="#484848" />
<rect x="2965.2" y="481.5" width="19.8" height="1093" fill="#6a6a6a" rx="9.9" />
<rect x="2183.6" y="464" width="776" height="2" fill="#404040" />
<rect x="2183.6" y="639.5" width="776" height="2" fill="#404040" />
<rect x="2183.6" y="820" width="776" height="2" fill="#404040" />
<rect x="2183.6" y="1126.6" width="776" height="2" fill="#404040" />
<rect x="2183.6" y="1803" width="776" height="2" fill="#404040" />
<rect x="2183.6" y="1816" width="807.4" height="2" fill="#404040" />
<text x="2204.2" y="332.5" font-size="24.2" fill="#d6d6d6" textLength="153.3" lengthAdjust="spacingAndGlyphs" >Transparency</text>
<rect x="2831.2" y="306.1" width="84" height="33.8" fill="#454545" rx="2" stroke="#686868" stroke-width="1.6" />
<text x="2836.3" y="332" font-size="24.2" fill="#f2f2f2" textLength="64.3" lengthAdjust="spacingAndGlyphs" >100%</text>
<rect x="2225.6" y="352.2" width="691.4" height="6" fill="#787878" />
<path d="M2918 358.4 L2928.6 371.9 L2928.6 376.9 Q2928.6 380.4 2925 380.4 L2911 380.4 Q2907.4 380.4 2907.4 376.9 L2907.4 371.9 Z" fill="#efefef" stroke="#161616" stroke-width="1.8" stroke-linejoin="round"/>
<text x="2206.8" y="526.2" font-size="24.2" fill="#d6d6d6" textLength="72.9" lengthAdjust="spacingAndGlyphs" >Preset</text>
<rect x="2291" y="497" width="626.6" height="40.3" fill="#454545" rx="5" stroke="#666666" stroke-width="1.6" />
<text x="2305" y="526.2" font-size="24.2" fill="#f2f2f2" textLength="88.2" lengthAdjust="spacingAndGlyphs" >Custom</text>
<path d="M2894.5 515.500 L2902.5 523.500 L2910.5 515.500" fill="none" stroke="#e0e0e0" stroke-width="2.4" />
<rect x="2205.1" y="583.6" width="22.2" height="21.8" fill="#454545" rx="4" stroke="#737373" stroke-width="1.6" />
<text x="2248" y="602.7" font-size="24.2" fill="#e6e6e6" textLength="222.7" lengthAdjust="spacingAndGlyphs" >Remember Settings</text>
<path d="M2204.7 689.5 L2213.2 699 L2221.7 689.5" fill="none" stroke="#d8d8d8" stroke-width="2.4" />
<text x="2269.7" y="703.9" font-size="24.2" fill="#d6d6d6" textLength="142.7" lengthAdjust="spacingAndGlyphs" >Refine Mode</text>
<rect x="2205.1" y="749.7" width="732.7" height="49.1" fill="#454545" rx="5" stroke="#666666" stroke-width="1.6" />
<path d="M2210 749.700 L2561.5 749.700 L2561.5 798.800 L2210 798.800 Q2205.100 798.800 2205.100 793.800 L2205.100 754.700 Q2205.100 749.700 2210 749.700 Z" fill="#383838" />
<rect x="2561.3" y="749.5" width="1.8" height="49.5" fill="#666666" />
<text x="2315.4" y="783.2" font-size="24.2" fill="#f2f2f2" textLength="136.4" lengthAdjust="spacingAndGlyphs" >Color Aware</text>
<text x="2675.8" y="783.2" font-size="24.2" fill="#f2f2f2" textLength="151.4" lengthAdjust="spacingAndGlyphs" >Object Aware</text>
<path d="M2204.7 871 L2213.2 880.5 L2221.7 871" fill="none" stroke="#d8d8d8" stroke-width="2.4" />
<text x="2269.7" y="886.2" font-size="24.2" fill="#d6d6d6" textLength="174.8" lengthAdjust="spacingAndGlyphs" >Edge Detection</text>
<text x="2223.6" y="977.6" font-size="24.2" fill="#d6d6d6" textLength="76.4" lengthAdjust="spacingAndGlyphs" >Radius</text>
<rect x="2761.4" y="952.6" width="133.5" height="33" fill="#454545" rx="2" stroke="#686868" stroke-width="1.6" />
<text x="2766" y="977.6" font-size="24.2" fill="#f2f2f2" textLength="61.7" lengthAdjust="spacingAndGlyphs" >16 px</text>
<rect x="2245.9" y="997.9" width="651.5" height="6" fill="#787878" />
<path d="M2530 1004.1 L2540.6 1017.6 L2540.6 1022.6 Q2540.6 1026.1 2537 1026.1 L2523 1026.1 Q2519.4 1026.1 2519.4 1022.6 L2519.4 1017.6 Z" fill="#efefef" stroke="#161616" stroke-width="1.8" stroke-linejoin="round"/>
<rect x="2223.9" y="1070.2" width="24.1" height="23.7" fill="#dedede" rx="4" />
<path d="M2229.5 1082 L2234.800 1087.800 L2243 1076.500" fill="none" stroke="#262626" stroke-width="3.2" />
<text x="2267.9" y="1090.4" font-size="24.2" fill="#e6e6e6" textLength="150.8" lengthAdjust="spacingAndGlyphs" >Smart Radius</text>
<path d="M2204.7 1177.5 L2213.2 1187 L2221.7 1177.5" fill="none" stroke="#d8d8d8" stroke-width="2.4" />
<text x="2269.7" y="1191.8" font-size="24.2" fill="#d6d6d6" textLength="220.2" lengthAdjust="spacingAndGlyphs" >Global Refinements</text>
<text x="2223.6" y="1283.3" font-size="24.2" fill="#d6d6d6" textLength="87.5" lengthAdjust="spacingAndGlyphs" >Smooth</text>
<rect x="2761.4" y="1258.6" width="133.5" height="32.6" fill="#454545" rx="2" stroke="#686868" stroke-width="1.6" />
<text x="2766.7" y="1283.3" font-size="24.2" fill="#f2f2f2" textLength="29.2" lengthAdjust="spacingAndGlyphs" >22</text>
<rect x="2245.9" y="1300" width="651.5" height="6" fill="#787878" />
<path d="M2384 1306.2 L2394.6 1319.7 L2394.6 1324.7 Q2394.6 1328.2 2391 1328.2 L2377 1328.2 Q2373.4 1328.2 2373.4 1324.7 L2373.4 1319.7 Z" fill="#efefef" stroke="#161616" stroke-width="1.8" stroke-linejoin="round"/>
<text x="2223.6" y="1407.3" font-size="24.2" fill="#d6d6d6" textLength="86.8" lengthAdjust="spacingAndGlyphs" >Feather</text>
<rect x="2761.4" y="1382.6" width="133.5" height="32.6" fill="#454545" rx="2" stroke="#686868" stroke-width="1.6" />
<text x="2766.7" y="1407.3" font-size="24.2" fill="#f2f2f2" textLength="68" lengthAdjust="spacingAndGlyphs" >2,7 px</text>
<rect x="2245.9" y="1424" width="651.5" height="6" fill="#787878" />
<path d="M2338 1430.2 L2348.6 1443.7 L2348.6 1448.7 Q2348.6 1452.2 2345 1452.2 L2331 1452.2 Q2327.4 1452.2 2327.4 1448.7 L2327.4 1443.7 Z" fill="#efefef" stroke="#161616" stroke-width="1.8" stroke-linejoin="round"/>
<text x="2223.6" y="1530.5" font-size="24.2" fill="#d6d6d6" textLength="98" lengthAdjust="spacingAndGlyphs" >Contrast</text>
<rect x="2761.9" y="1506.3" width="132.5" height="31.6" fill="#454545" rx="2" stroke="#2f6fe0" stroke-width="2.6" />
<rect x="2766.5" y="1508" width="53.5" height="28.2" fill="#4a7fcf" />
<text x="2766.7" y="1530.5" font-size="24.2" fill="#f2f2f2" textLength="52.8" lengthAdjust="spacingAndGlyphs" >24%</text>
<rect x="2245.9" y="1547.5" width="651.5" height="6" fill="#787878" />
<path d="M2402 1553.7 L2412.6 1567.2 L2412.6 1572.2 Q2412.6 1575.7 2409 1575.7 L2395 1575.7 Q2391.4 1575.7 2391.4 1572.2 L2391.4 1567.2 Z" fill="#efefef" stroke="#161616" stroke-width="1.8" stroke-linejoin="round"/>
<text x="2223.6" y="1654.3" font-size="24.2" fill="#d6d6d6" textLength="117.2" lengthAdjust="spacingAndGlyphs" >Shift Edge</text>
<rect x="2761.4" y="1628.2" width="133.5" height="33" fill="#454545" rx="2" stroke="#686868" stroke-width="1.6" />
<text x="2766.7" y="1654.3" font-size="24.2" fill="#f2f2f2" textLength="37.9" lengthAdjust="spacingAndGlyphs" >0%</text>
<rect x="2245.9" y="1670" width="651.5" height="6" fill="#787878" />
<path d="M2570 1676.2 L2580.6 1689.7 L2580.6 1694.7 Q2580.6 1698.2 2577 1698.2 L2563 1698.2 Q2559.4 1698.2 2559.4 1694.7 L2559.4 1689.7 Z" fill="#efefef" stroke="#161616" stroke-width="1.8" stroke-linejoin="round"/>
<rect x="2394.7" y="1731.9" width="211.4" height="48.3" fill="#454545" rx="5" stroke="#666666" stroke-width="1.6" />
<text x="2413.9" y="1764.3" font-size="24.2" fill="#f2f2f2" textLength="172.4" lengthAdjust="spacingAndGlyphs" >Clear Selection</text>
<rect x="2644.4" y="1731.9" width="104.2" height="48.3" fill="#454545" rx="5" stroke="#666666" stroke-width="1.6" />
<text x="2664.2" y="1764.3" font-size="24.2" fill="#f2f2f2" textLength="65.2" lengthAdjust="spacingAndGlyphs" >Invert</text>
<rect x="2193.5" y="284.5" width="766" height="1530.3" fill="none" stroke="#e2683a" stroke-width="7" />
<path d="M2230.100 1873.500 A12.600 12.600 0 1 1 2248.900 1884.400" fill="none" stroke="#e2e2e2" stroke-width="5.4" />
<path d="M2219.900 1872 L2240.500 1872 L2230 1883.500 Z" fill="#e2e2e2" />
<rect x="2219.9" y="1888.9" width="41.1" height="2.3" fill="#e2e2e2" />
<rect x="2699.5" y="1850.2" width="116.5" height="49.1" fill="none" rx="25.6" stroke="#808080" stroke-width="2.2" />
<text x="2718.7" y="1881.2" font-size="24.2" fill="#f2f2f2" textLength="78.5" lengthAdjust="spacingAndGlyphs" >Cancel</text>
<rect x="2817.6" y="1848" width="1.4" height="53" fill="#2e2e2e" />
<rect x="2839.2" y="1850.3" width="117.4" height="48.9" fill="none" rx="25.6" stroke="#e6e6e6" stroke-width="2.4" />
<text x="2880.7" y="1881.2" font-size="24.2" fill="#f2f2f2" textLength="34.5" lengthAdjust="spacingAndGlyphs" >OK</text>
<rect x="2958" y="1848" width="1.4" height="53" fill="#2e2e2e" />
<rect x="2178" y="1900.4" width="5.6" height="31.6" fill="#535353" opacity="0"/>
</g>
<rect x="0" y="1932" width="2992" height="2" fill="#3a3a3a" />
<rect x="0" y="79" width="2" height="1855" fill="#3a3a3a" />
<rect x="2990" y="79" width="2" height="1855" fill="#333333" />
</g>
</svg>
</body></html>
